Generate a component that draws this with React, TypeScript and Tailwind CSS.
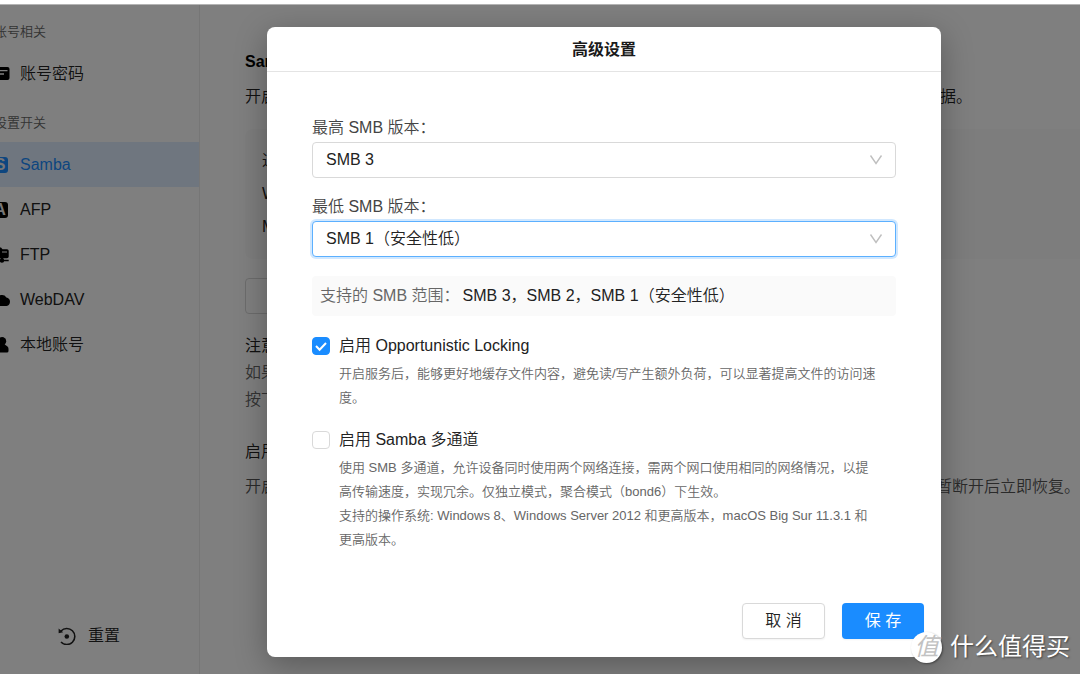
import { useState } from 'react';
import type { ReactNode } from 'react';

const versions = ['SMB 3', 'SMB 2', 'SMB 1（安全性低）'];

const services = [
  { name: 'Samba', icon: <LetterIcon letter="S" />, active: true },
  { name: 'AFP', icon: <LetterIcon letter="A" /> },
  { name: 'FTP', icon: <FtpIcon /> },
  { name: 'WebDAV', icon: <CloudIcon /> },
  { name: '本地账号', icon: <UserIcon /> }
];

const App = () => {
  const [maxVersion, setMaxVersion] = useState(versions[0]);
  const [minVersion, setMinVersion] = useState(versions[2]);
  const [locking, setLocking] = useState(true);
  const [multiChannel, setMultiChannel] = useState(false);

  return (
    <div className="relative flex flex-col min-h-screen overflow-hidden bg-white text-base font-[350] text-[#222] font-['Liberation_Sans','Noto_Sans_CJK_SC',sans-serif]">
      <div className="h-[5px] border-b border-[#b4b4b4] bg-white"></div>

      <div className="flex flex-1">
        <Sidebar />
        <SambaPage />
      </div>

      {/* Modal */}
      <div className="absolute inset-x-0 top-[5px] bottom-0 flex items-start justify-center bg-black/50 pl-32 pt-[22px]">
        <div role="dialog" aria-labelledby="modal-title" className="w-full max-w-[674px] rounded-lg bg-white shadow-[0_8px_32px_rgba(0,0,0,0.3)]">
          <h2 id="modal-title" className="flex items-center justify-center h-[45px] pt-px border-b border-[#e4e4e4] font-bold text-[#1a1a1a]">
            高级设置
          </h2>

          <div className="px-[45px] pt-[42px]">
            <VersionSelect id="max-version" label="最高 SMB 版本：" value={maxVersion} onChange={setMaxVersion} />
            <VersionSelect id="min-version" label="最低 SMB 版本：" value={minVersion} onChange={setMinVersion} focused />

            <p className="flex items-center gap-[3px] h-10 mt-[19px] px-2 rounded bg-[#fafafa] text-[#222]">
              <span className="text-[#666]">支持的 SMB 范围：</span>
              SMB 3，SMB 2，SMB 1（安全性低）
            </p>

            <CheckOption id="locking" label="启用 Opportunistic Locking" checked={locking} onChange={setLocking}>
              开启服务后，能够更好地缓存文件内容，避免读/写产生额外负荷，可以显著提高文件的访问速
              <br />
              度。
            </CheckOption>
            <CheckOption id="multi-channel" label="启用 Samba 多通道" checked={multiChannel} onChange={setMultiChannel}>
              使用 SMB 多通道，允许设备同时使用两个网络连接，需两个网口使用相同的网络情况，以提
              <br />
              高传输速度，实现冗余。仅独立模式，聚合模式（bond6）下生效。
              <br />
              支持的操作系统: Windows 8、Windows Server 2012 和更高版本，macOS Big Sur 11.3.1 和
              <br />
              更高版本。
            </CheckOption>
          </div>

          <div className="flex justify-end gap-[17px] mt-[51px] px-[17px] pb-[18px]">
            <button className="h-9 w-[83px] rounded border border-[#d9d9d9] bg-white shadow-xs">取 消</button>
            <button className="h-9 w-[82px] rounded bg-[#1a8cff] font-normal text-white shadow-xs">保 存</button>
          </div>
        </div>
      </div>

      {/* Watermark */}
      <div className="absolute right-[10px] bottom-3 flex items-center gap-2 h-[30px] text-2xl font-normal text-white">
        <span className="flex items-center justify-center size-[31px] rounded-full bg-white text-[#c2c2c2] italic shadow-[1px_1px_2px_rgba(0,0,0,0.4)]">
          值
        </span>
        <span className="[text-shadow:1px_1px_2px_rgba(0,0,0,0.5)]">什么值得买</span>
      </div>
    </div>
  );
};

const Sidebar = () => (
  <aside className="flex flex-col shrink-0 w-[206px] -ml-[6px] border-r border-[#ececec]">
    <NavTitle text="账号相关" />
    <NavItem name="账号密码" icon={<CardIcon />} />
    <NavTitle text="设置开关" />
    {services.map((s) => (
      <NavItem key={s.name} name={s.name} icon={s.icon} active={s.active} />
    ))}
    <button className="flex items-center gap-3 h-[45px] mt-auto mb-4 pl-16">
      <ResetIcon />
      重置
    </button>
  </aside>
);

const NavTitle = ({ text }: { text: string }) => (
  <div className="flex items-center h-[38px] mt-2 text-[13px] text-[#666]">{text}</div>
);

const NavItem = ({ name, icon, active }: { name: string; icon: ReactNode; active?: boolean }) => (
  <a href="#" className={`flex items-center gap-[10px] h-[45px] ${active ? 'bg-[#dfecff] text-[#1a8cff]' : ''}`}>
    <span className={active ? '' : 'text-black'}>{icon}</span>
    {name}
  </a>
);

// Page behind the modal
const SambaPage = () => (
  <main className="flex-1 min-w-0 pl-[45px] pt-[39px]">
    <h1 className="leading-[35px] font-bold text-black">Samba</h1>
    <p className="flex justify-between leading-[35px] pr-[108px]">
      <span>开启</span>
      <span>据。</span>
    </p>
    <div className="mt-[15px] pl-[17px] pt-[15px] pb-4 rounded-l-lg bg-[#fafafa] leading-[33px]">
      <p>通过</p>
      <p>W</p>
      <p>M</p>
    </div>
    <button aria-label="高级设置" className="block h-9 w-28 mt-[19px] rounded border border-[#d9d9d9] bg-white"></button>
    <div className="mt-[18px] leading-[27px] text-[#666]">
      <p className="font-normal text-[#222]">注意</p>
      <p>如果</p>
      <p>按下</p>
    </div>
    <p className="mt-[21px] leading-[35px]">启用</p>
    <p className="flex justify-between leading-[35px] text-[#555]">
      <span>开启</span>
      <span>暂断开后立即恢复。</span>
    </p>
  </main>
);

type SelectProps = {
  id: string;
  label: string;
  value: string;
  onChange: (v: string) => void;
  focused?: boolean;
};

const VersionSelect = ({ id, label, value, onChange, focused }: SelectProps) => (
  <div className="mb-[15px]">
    <label htmlFor={id} className="block leading-7 text-[#444]">{label}</label>
    <div className="relative">
      <select
        id={id}
        value={value}
        onChange={(e) => onChange(e.target.value)}
        className={`block w-full h-9 pl-[13px] appearance-none rounded border bg-white outline-none
          ${focused ? 'border-[#5cb0ff] ring-2 ring-[#1a8cff]/20' : 'border-[#d9d9d9]'}
        `}
      >
        {versions.map((v) => (
          <option key={v}>{v}</option>
        ))}
      </select>
      <svg viewBox="0 0 14 14" className="absolute right-[13px] top-[11px] size-[14px] pointer-events-none" fill="none" stroke="#bfbfbf" strokeWidth="1.4">
        <path d="M1.5 2.5 7 10.5l5.5-8" />
      </svg>
    </div>
  </div>
);

type CheckProps = {
  id: string;
  label: string;
  checked: boolean;
  onChange: (v: boolean) => void;
  children: ReactNode;
};

const CheckOption = ({ id, label, checked, onChange, children }: CheckProps) => (
  <div className="mt-[18px]">
    <div className="flex items-center gap-[9px] h-6">
      <span className="relative size-[18px]">
        <input
          id={id}
          type="checkbox"
          checked={checked}
          onChange={(e) => onChange(e.target.checked)}
          className="block size-[18px] appearance-none rounded border border-[#d9d9d9] bg-white checked:border-[#1a8cff] checked:bg-[#1a8cff]"
        />
        {checked && (
          <svg viewBox="0 0 18 18" className="absolute inset-0 pointer-events-none" fill="none" stroke="#fff" strokeWidth="2">
            <path d="m4 9 3.6 3.7L14 6" />
          </svg>
        )}
      </span>
      <label htmlFor={id}>{label}</label>
    </div>
    <p className="mt-1 pl-[27px] text-[13px] leading-6 text-[#666] whitespace-nowrap">{children}</p>
  </div>
);

// Icons
function CardIcon() {
  return (
    <svg viewBox="0 0 16 16" className="size-4">
      <rect x="0" y="1" width="15.5" height="13" rx="2" fill="currentColor" />
      <path d="M2 4.6h11.5M2 8h8" stroke="#fff" strokeWidth="1.4" />
    </svg>
  );
}

function LetterIcon({ letter }: { letter: string }) {
  return (
    <span className="flex items-center justify-end size-4 pr-[2px]">
      <span className="flex items-center justify-center shrink-0 size-4 rounded-[3px] bg-current text-base font-bold">
        <span className="text-[#eee]">{letter}</span>
      </span>
    </span>
  );
}

function FtpIcon() {
  return (
    <svg viewBox="0 0 16 16" className="size-4" fill="currentColor">
      <path d="M1 .5h6L8.500 2.200H13A1.700 1.700 0 0 1 14.700 4v5.500A1.700 1.700 0 0 1 13 11.200H9.200v1.600h5.500v1.400H1v-1.400h5.800v-1.600H2.500A1.700 1.700 0 0 1 1 9.500z" />
      <circle cx="8" cy="13.500" r="2.200" />
      <path d="M8 5h5" stroke="#fff" strokeWidth="1" />
    </svg>
  );
}

function CloudIcon() {
  return (
    <svg viewBox="0 0 16 16" className="size-4 overflow-visible" fill="currentColor">
      <path d="M3.500 14a3.700 3.700 0 0 1-.6-7.200A5.300 5.300 0 0 1 12.400 5.400 4.400 4.400 0 0 1 12.600 14z" />
    </svg>
  );
}

function UserIcon() {
  return (
    <svg viewBox="0 0 16 16" className="size-4" fill="currentColor">
      <circle cx="8" cy="4.300" r="4.200" />
      <path d="M5.500 7h5c0 1.200 4 1.600 4 5v2a1.600 1.600 0 0 1-1.600 1.600H3A1.600 1.600 0 0 1 1.500 14v-2c0-3.400 4-3.800 4-5z" />
    </svg>
  );
}

function ResetIcon() {
  return (
    <svg viewBox="0 0 18 18" className="size-[18px]" fill="none" stroke="currentColor" strokeWidth="1.6">
      <path d="M3 4A8 8 0 1 1 3 15" />
      <path d="M.6 1.400v4.800l4.600-1z" fill="currentColor" stroke="none" />
      <circle cx="8.800" cy="9.500" r="2.300" fill="currentColor" stroke="none" />
    </svg>
  );
}

export default App;
